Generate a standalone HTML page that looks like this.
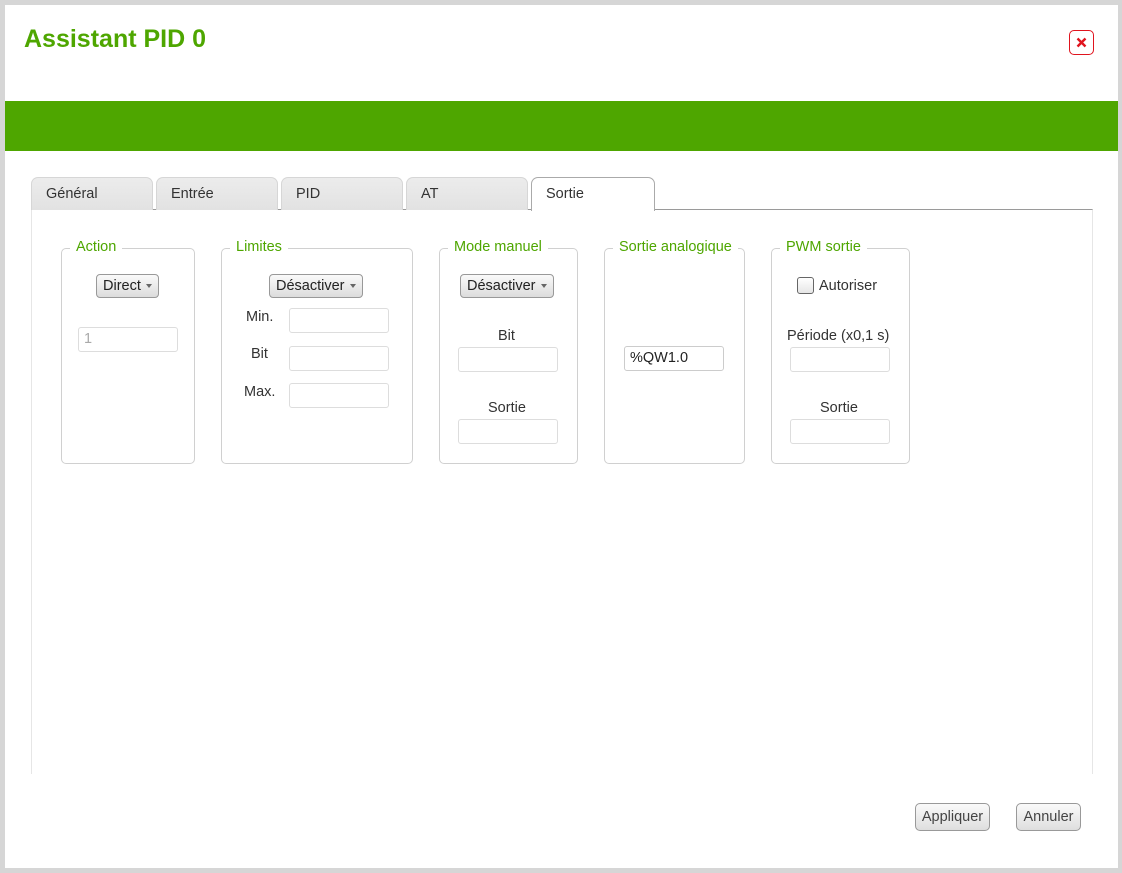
<!DOCTYPE html>
<html><head><meta charset="utf-8"><style>
*{box-sizing:border-box;margin:0;padding:0}
body{width:1122px;height:873px;background:#d6d6d6;font-family:"Liberation Sans",Arial,sans-serif;position:relative;overflow:hidden;font-size:14.5px;color:#333}
.abs{position:absolute}
#win{left:5px;top:5px;width:1113px;height:863px;background:#fff}
h1{position:absolute;left:24px;top:25px;font-size:25px;font-weight:bold;color:#4ea600}
.close{left:1069px;top:30px;width:25px;height:25px;border:1.5px solid #e0141e;border-radius:5px}
.close svg{position:absolute;left:6px;top:6px}
.bar{left:5px;top:101px;width:1113px;height:50px;background:#4ea600}
.tab{top:177px;height:33px;width:122px;border:1px solid #d6d6d6;border-bottom:none;border-radius:7px 7px 0 0;background:linear-gradient(#ececec,#e2e2e2);padding:8px 0 0 14px;color:#333}
.tab.act{background:#fff;border-color:#aaa;height:34px;z-index:2}
.panel{left:31px;top:209px;width:1062px;height:565px;border-top:1px solid #9a9a9a;border-left:1px solid #e6e6e6;border-right:1px solid #e6e6e6}
.fs{top:248px;height:216px;border:1px solid #d0d0d0;border-radius:5px}
.lg{top:238px;background:#fff;color:#4ea600;padding:0 6px;line-height:18px}
.dd{height:24px;border:1px solid #999;border-radius:4px;background:linear-gradient(#fafafa,#dcdcdc);color:#222;line-height:22px;padding:0 6px;white-space:nowrap}
.dd:after{content:"";display:inline-block;margin-left:5px;vertical-align:middle;border-left:3.5px solid transparent;border-right:3.5px solid transparent;border-top:4px solid #666}
.in{width:100px;height:25px;border:1px solid #ddd;border-radius:3px;background:#fff;padding:3px 5px}
.btn{top:803px;height:28px;border:1px solid #999;border-radius:5px;background:linear-gradient(#fafafa,#dedede);color:#444;text-align:center;line-height:26px}
</style></head><body>
<div id="win" class="abs"></div>
<h1>Assistant PID 0</h1>
<div class="abs close"><svg width="11" height="11" viewBox="0 0 11 11"><path d="M1.5 1.5L9.5 9.5M9.5 1.5L1.5 9.5" stroke="#e0141e" stroke-width="2.4"/></svg></div>
<div class="abs bar"></div>
<div class="abs panel"></div>
<div class="abs tab" style="left:31px">Général</div>
<div class="abs tab" style="left:156px">Entrée</div>
<div class="abs tab" style="left:281px">PID</div>
<div class="abs tab" style="left:406px">AT</div>
<div class="abs tab act" style="left:531px;width:124px">Sortie</div>

<div class="abs fs" style="left:61px;width:134px"></div>
<div class="abs lg" style="left:70px">Action</div>
<div class="abs dd" style="left:96px;top:274px">Direct</div>
<div class="abs in" style="left:78px;top:327px;color:#aaa">1</div>

<div class="abs fs" style="left:221px;width:192px"></div>
<div class="abs lg" style="left:230px">Limites</div>
<div class="abs dd" style="left:269px;top:274px">Désactiver</div>
<div class="abs" style="left:246px;top:309px">Min.</div>
<div class="abs in" style="left:289px;top:308px"></div>
<div class="abs" style="left:251px;top:346px">Bit</div>
<div class="abs in" style="left:289px;top:346px"></div>
<div class="abs" style="left:244px;top:384px">Max.</div>
<div class="abs in" style="left:289px;top:383px"></div>

<div class="abs fs" style="left:439px;width:139px"></div>
<div class="abs lg" style="left:448px">Mode manuel</div>
<div class="abs dd" style="left:460px;top:274px">Désactiver</div>
<div class="abs" style="left:498px;top:328px">Bit</div>
<div class="abs in" style="left:458px;top:347px"></div>
<div class="abs" style="left:488px;top:400px">Sortie</div>
<div class="abs in" style="left:458px;top:419px"></div>

<div class="abs fs" style="left:604px;width:141px"></div>
<div class="abs lg" style="left:613px">Sortie analogique</div>
<div class="abs in" style="left:624px;top:346px;border-color:#ccc;color:#222">%QW1.0</div>

<div class="abs fs" style="left:771px;width:139px"></div>
<div class="abs lg" style="left:780px">PWM sortie</div>
<div class="abs" style="left:797px;top:277px;width:17px;height:17px;border:1px solid #666;border-radius:3px;background:linear-gradient(#fff,#e6e6e6)"></div>
<div class="abs" style="left:819px;top:278px">Autoriser</div>
<div class="abs" style="left:787px;top:328px">Période (x0,1 s)</div>
<div class="abs in" style="left:790px;top:347px"></div>
<div class="abs" style="left:820px;top:400px">Sortie</div>
<div class="abs in" style="left:790px;top:419px"></div>

<div class="abs btn" style="left:915px;width:75px">Appliquer</div>
<div class="abs btn" style="left:1016px;width:65px">Annuler</div>
</body></html>
